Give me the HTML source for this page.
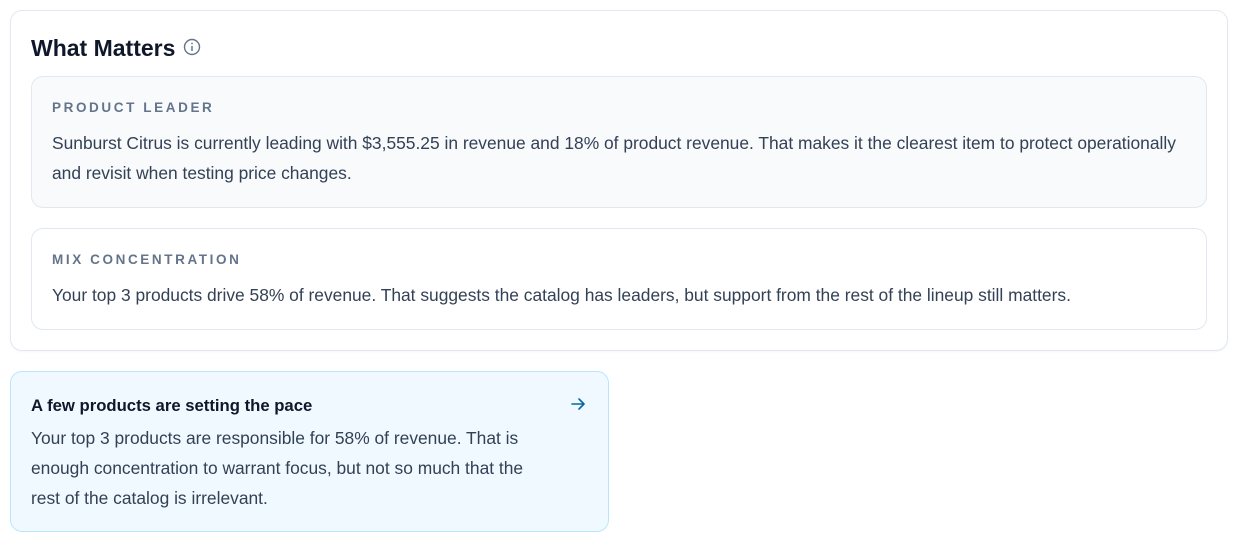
<!DOCTYPE html>
<html><head><meta charset="utf-8"><style>
*{box-sizing:border-box;margin:0;padding:0}
body{width:1242px;height:544px;background:#fff;font-family:"Liberation Sans",sans-serif;color:#334155;position:relative;overflow:hidden}
.outer{position:absolute;left:10px;top:10px;width:1218px;height:341px;border:1px solid #e2e8f0;border-radius:12px;box-shadow:0 1px 2px rgba(0,0,0,.04)}
h2{position:absolute;left:20px;top:24px;font-size:23px;font-weight:700;color:#0f172a;white-space:nowrap}
.info{position:absolute;left:172px;top:27px}
.card{position:absolute;left:20px;width:1176px;border:1px solid #e2e8f0;border-radius:12px;padding:0 20px}
.lab{position:absolute;left:20px;font-size:13.5px;font-weight:700;letter-spacing:2.6px;color:#64748b}
.txt{position:absolute;left:20px;font-size:17.4px;line-height:30px;white-space:nowrap;color:#334155}
.bot{position:absolute;left:10px;top:371px;width:599px;height:161px;background:#f0f9ff;border:1px solid #bae6fd;border-radius:12px}
.bt{position:absolute;left:20px;top:24px;font-size:16.7px;font-weight:700;color:#0f172a;white-space:nowrap}
.bb{position:absolute;left:20px;top:51px;font-size:17.4px;line-height:30px;white-space:nowrap}
</style></head><body>
<div class="outer">
<h2>What Matters</h2>
<svg class="info" width="18" height="18" viewBox="0 0 18 18"><circle cx="9" cy="9" r="7.5" fill="none" stroke="#64748b" stroke-width="1.4"/><line x1="9" y1="8" x2="9" y2="13" stroke="#64748b" stroke-width="1.5"/><circle cx="9" cy="5.5" r="0.9" fill="#64748b"/></svg>
<div class="card" style="top:65px;height:132px;background:#f8fafc">
<div class="lab" style="top:23px">PRODUCT LEADER</div>
<div class="txt" style="top:51px">Sunburst Citrus is currently leading with $3,555.25 in revenue and 18% of product revenue. That makes it the clearest item to protect operationally<br>and revisit when testing price changes.</div>
</div>
<div class="card" style="top:217px;height:102px;background:#fff">
<div class="lab" style="top:23px">MIX CONCENTRATION</div>
<div class="txt" style="top:51px">Your top 3 products drive 58% of revenue. That suggests the catalog has leaders, but support from the rest of the lineup still matters.</div>
</div>
</div>
<div class="bot">
<div class="bt">A few products are setting the pace</div>
<svg style="position:absolute;left:559px;top:25px" width="16" height="14" viewBox="0 0 16 14"><path d="M2 7H14M9 2L14 7L9 12" fill="none" stroke="#0369a1" stroke-width="1.6" stroke-linecap="round" stroke-linejoin="round"/></svg>
<div class="bb">Your top 3 products are responsible for 58% of revenue. That is<br>enough concentration to warrant focus, but not so much that the<br>rest of the catalog is irrelevant.</div>
</div>
</body></html>
